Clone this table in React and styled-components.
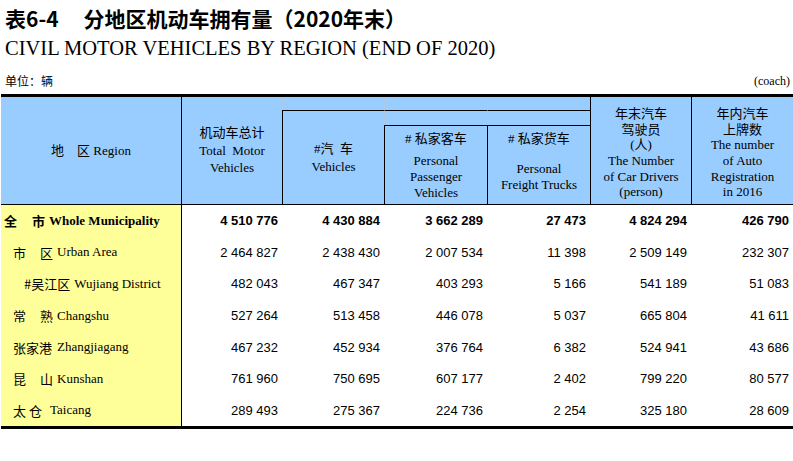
import React from 'react';
import styled, { createGlobalStyle } from 'styled-components';

const CN_SANS = '"Noto Sans CJK SC", sans-serif';
const MIXED = '"Liberation Serif", "Noto Sans CJK SC", serif';
const NUM = '"Liberation Sans", Arial, sans-serif';
const COLS = '180px 101px 102px 103px 103px 101px 102px';
const BLUE = '#99ccff';
const YELLOW = '#ffff99';
const FAINT = '#b0c8e2';

const GlobalStyle = createGlobalStyle`
	html, body {
		margin: 0;
		padding: 0;
		background: #fff;
	}
	body {
		width: 793px;
		height: 461px;
		overflow: hidden;
		color: #000;
	}
`;

const Page = styled.div`
	width: 793px;
	padding-left: 1px;
	box-sizing: border-box;
`;

const TitleCn = styled.h1`
	margin: 0;
	height: 33px;
	padding: 3px 0 0 4px;
	box-sizing: border-box;
	font: 700 21px/30px ${CN_SANS};
	white-space: nowrap;

	.code {
		margin-right: 25px;
	}
`;

const TitleEn = styled.h2`
	margin: 0;
	height: 30px;
	padding-left: 4px;
	font: 400 20.5px/30px 'Liberation Serif', serif;
	white-space: nowrap;
`;

const UnitRow = styled.div`
	display: flex;
	justify-content: space-between;
	height: 31px;
	padding: 10px 3px 0 4px;
	box-sizing: border-box;
	line-height: 16px;

	.unit {
		font: 400 12px/16px ${CN_SANS};
	}
	.coach {
		font: 400 12px/16px 'Liberation Serif', serif;
	}
`;

const Header = styled.div`
	display: grid;
	grid-template-columns: ${COLS};
	grid-template-rows: 13px 15px 79px;
	background: ${BLUE};
	border-top: 3px solid #000;
	border-bottom: 1px solid #000;
	font: 400 13px ${MIXED};
`;

const HCell = styled.div`
	grid-column: ${(p) => p.$col};
	grid-row: ${(p) => p.$row};
	display: flex;
	flex-direction: column;
	align-items: center;
	justify-content: ${(p) => (p.$split ? 'flex-start' : 'center')};
	padding-top: ${(p) => p.$pad || 0}px;
	box-sizing: border-box;
	text-align: center;
	white-space: nowrap;
	border-left: ${(p) =>
		p.$left === 'solid' ? '1px solid #000' : p.$left === 'faint' ? `1px solid ${FAINT}` : 'none'};
	border-top: ${(p) => (p.$top ? '1px solid #000' : 'none')};
`;

const Stack = styled.div`
	line-height: ${(p) => p.$lh}px;

	& > span {
		display: block;
	}
`;

const EnBlock = styled.div`
	display: flex;
	flex-direction: column;
	justify-content: center;
	height: 48px;
	margin-top: 6px;
	line-height: 16px;
`;

const Body = styled.div`
	border-bottom: 3px solid #000;
`;

const Row = styled.div`
	display: grid;
	grid-template-columns: ${COLS};
	height: 31.6px;
`;

const RegionCell = styled.div`
	display: flex;
	align-items: center;
	padding-left: ${(p) => p.$indent}px;
	background: ${YELLOW};
	font: ${(p) => (p.$bold ? 700 : 400)} 13px ${MIXED};
	white-space: nowrap;
`;

const Cn = styled.span`
	display: inline-block;
	width: ${(p) => (p.$w ? `${p.$w}px` : 'auto')};
	font-family: ${CN_SANS};
	text-align-last: ${(p) => (p.$justify ? 'justify' : 'auto')};
`;

const En = styled.span`
	margin-left: 4px;
`;

const NumCell = styled.div`
	display: flex;
	align-items: center;
	justify-content: flex-end;
	padding-right: 4px;
	border-left: ${(p) => (p.$first ? '1px solid #000' : 'none')};
	font: ${(p) => (p.$bold ? 700 : 400)} 13px ${NUM};
	white-space: nowrap;
`;

const rows = [
	{ cn: '全 市', en: 'Whole Municipality', indent: 3, w: 41, justify: true, bold: true,
		vals: ['4 510 776', '4 430 884', '3 662 289', '27 473', '4 824 294', '426 790'] },
	{ cn: '市 区', en: 'Urban Area', indent: 12, w: 40, justify: true,
		vals: ['2 464 827', '2 438 430', '2 007 534', '11 398', '2 509 149', '232 307'] },
	{ cn: '#吴江区', en: 'Wujiang District', indent: 23,
		vals: ['482 043', '467 347', '403 293', '5 166', '541 189', '51 083'] },
	{ cn: '常 熟', en: 'Changshu', indent: 12, w: 40, justify: true,
		vals: ['527 264', '513 458', '446 078', '5 037', '665 804', '41 611'] },
	{ cn: '张家港', en: 'Zhangjiagang', indent: 12, w: 40,
		vals: ['467 232', '452 934', '376 764', '6 382', '524 941', '43 686'] },
	{ cn: '昆 山', en: 'Kunshan', indent: 12, w: 40, justify: true,
		vals: ['761 960', '750 695', '607 177', '2 402', '799 220', '80 577'] },
	{ cn: '太 仓', en: 'Taicang', indent: 12, w: 33,
		vals: ['289 493', '275 367', '224 736', '2 254', '325 180', '28 609'] },
];

function App() {
	return (
		<Page>
			<GlobalStyle />
			<TitleCn>
				<span className='code'>表6-4</span>
				分地区机动车拥有量（2020年末）
			</TitleCn>
			<TitleEn>CIVIL MOTOR VEHICLES BY REGION (END OF 2020)</TitleEn>
			<UnitRow>
				<span className='unit'>单位：辆</span>
				<span className='coach'>(coach)</span>
			</UnitRow>

			<Header>
				<HCell $col='1' $row='1 / 4'>
					<Stack $lh={17}>地{'\u3000'}区 Region</Stack>
				</HCell>
				<HCell $col='2' $row='1 / 4' $left='solid'>
					<Stack $lh={17.5}>
						<span>机动车总计</span>
						<span>Total&nbsp; Motor</span>
						<span>Vehicles</span>
					</Stack>
				</HCell>
				<HCell $col='3' $row='1' $left='faint' />
				<HCell $col='4' $row='1' $left='faint' />
				<HCell $col='5' $row='1' $left='faint' />
				<HCell $col='3' $row='2 / 4' $left='solid' $top>
					<Stack $lh={18}>
						<span>#汽{'\u2002'}车</span>
						<span>Vehicles</span>
					</Stack>
				</HCell>
				<HCell $col='4' $row='2' $left='faint' $top />
				<HCell $col='5' $row='2' $left='faint' $top />
				<HCell $col='4' $row='3' $left='solid' $top $split $pad={5}>
					<Stack $lh={16}># 私家客车</Stack>
					<EnBlock>
						<span>Personal</span>
						<span>Passenger</span>
						<span>Vehicles</span>
					</EnBlock>
				</HCell>
				<HCell $col='5' $row='3' $left='solid' $top $split $pad={5}>
					<Stack $lh={16}># 私家货车</Stack>
					<EnBlock>
						<span>Personal</span>
						<span>Freight Trucks</span>
					</EnBlock>
				</HCell>
				<HCell $col='6' $row='1 / 4' $left='solid' $pad={5}>
					<Stack $lh={15.6}>
						<span>年末汽车</span>
						<span>驾驶员</span>
						<span>(人)</span>
						<span>The Number</span>
						<span>of Car Drivers</span>
						<span>(person)</span>
					</Stack>
				</HCell>
				<HCell $col='7' $row='1 / 4' $left='solid' $pad={5}>
					<Stack $lh={15.6}>
						<span>年内汽车</span>
						<span>上牌数</span>
						<span>The number</span>
						<span>of Auto</span>
						<span>Registration</span>
						<span>in 2016</span>
					</Stack>
				</HCell>
			</Header>

			<Body>
				{rows.map((r) => (
					<Row key={r.en}>
						<RegionCell $indent={r.indent} $bold={r.bold}>
							<Cn $w={r.w} $justify={r.justify}>{r.cn}</Cn>
							<En>{r.en}</En>
						</RegionCell>
						{r.vals.map((v, i) => (
							<NumCell key={i} $first={i === 0} $bold={r.bold}>
								{v}
							</NumCell>
						))}
					</Row>
				))}
			</Body>
		</Page>
	);
}

export default App;
